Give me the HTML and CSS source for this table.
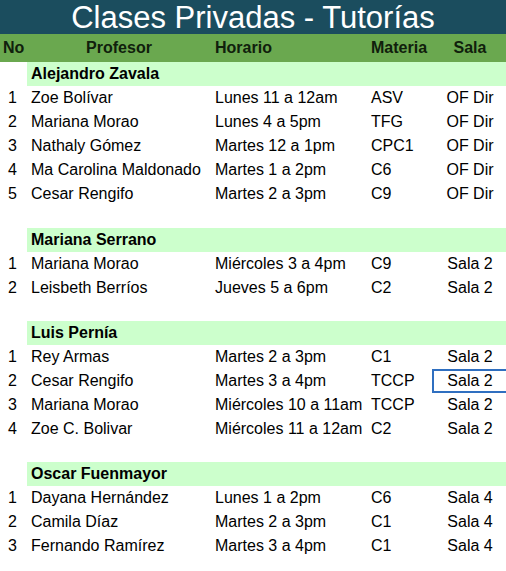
FILE: index.html
```html
<!DOCTYPE html>
<html lang="es">
<head>
<meta charset="utf-8">
<title>Clases Privadas - Tutorías</title>
<link rel="stylesheet" href="styles.css">
</head>
<body>
<div class="title">Clases Privadas - Tutorías</div>
<table class="sheet">
  <colgroup>
    <col class="c-no"><col class="c-prof"><col class="c-hor"><col class="c-mat"><col class="c-sala">
  </colgroup>
  <thead>
    <tr class="head">
      <th class="no">No</th><th class="prof">Profesor</th><th class="hor">Horario</th><th class="mat">Materia</th><th class="sala">Sala</th>
    </tr>
  </thead>
  <tbody>
    <tr class="group"><td class="empty"></td><td colspan="4">Alejandro Zavala</td></tr>
    <tr><td class="num">1</td><td>Zoe Bolívar</td><td>Lunes 11 a 12am</td><td>ASV</td><td class="sala">OF Dir</td></tr>
    <tr><td class="num">2</td><td>Mariana Morao</td><td>Lunes 4 a 5pm</td><td>TFG</td><td class="sala">OF Dir</td></tr>
    <tr><td class="num">3</td><td>Nathaly Gómez</td><td>Martes 12 a 1pm</td><td>CPC1</td><td class="sala">OF Dir</td></tr>
    <tr><td class="num">4</td><td>Ma Carolina Maldonado</td><td>Martes 1 a 2pm</td><td>C6</td><td class="sala">OF Dir</td></tr>
    <tr><td class="num">5</td><td>Cesar Rengifo</td><td>Martes 2 a 3pm</td><td>C9</td><td class="sala">OF Dir</td></tr>
    <tr class="blank first"><td colspan="5"></td></tr>

    <tr class="group"><td class="empty"></td><td colspan="4">Mariana Serrano</td></tr>
    <tr><td class="num">1</td><td>Mariana Morao</td><td>Miércoles 3 a 4pm</td><td>C9</td><td class="sala">Sala 2</td></tr>
    <tr><td class="num">2</td><td>Leisbeth Berríos</td><td>Jueves 5 a 6pm</td><td>C2</td><td class="sala">Sala 2</td></tr>
    <tr class="blank"><td colspan="5"></td></tr>

    <tr class="group"><td class="empty"></td><td colspan="4">Luis Pernía</td></tr>
    <tr><td class="num">1</td><td>Rey Armas</td><td>Martes 2 a 3pm</td><td>C1</td><td class="sala">Sala 2</td></tr>
    <tr><td class="num">2</td><td>Cesar Rengifo</td><td>Martes 3 a 4pm</td><td>TCCP</td><td class="sala selected">Sala 2</td></tr>
    <tr><td class="num">3</td><td>Mariana Morao</td><td>Miércoles 10 a 11am</td><td>TCCP</td><td class="sala">Sala 2</td></tr>
    <tr><td class="num">4</td><td>Zoe C. Bolivar</td><td>Miércoles 11 a 12am</td><td>C2</td><td class="sala">Sala 2</td></tr>
    <tr class="blank"><td colspan="5"></td></tr>

    <tr class="group"><td class="empty"></td><td colspan="4">Oscar Fuenmayor</td></tr>
    <tr><td class="num">1</td><td>Dayana Hernández</td><td>Lunes 1 a 2pm</td><td>C6</td><td class="sala">Sala 4</td></tr>
    <tr><td class="num">2</td><td>Camila Díaz</td><td>Martes 2 a 3pm</td><td>C1</td><td class="sala">Sala 4</td></tr>
    <tr><td class="num">3</td><td>Fernando Ramírez</td><td>Martes 3 a 4pm</td><td>C1</td><td class="sala">Sala 4</td></tr>
  </tbody>
</table>
</body>
</html>
```
FILE: styles.css
```css
html, body {
  margin: 0;
  padding: 0;
  background: #ffffff;
  overflow: hidden;
}
body {
  font-family: "Liberation Sans", Arial, sans-serif;
  font-size: 16px;
  color: #000000;
}
.title {
  height: 34px;
  line-height: 36px;
  background: #1b4d5e;
  color: #ffffff;
  font-size: 31px;
  text-align: center;
  white-space: nowrap;
}
.sheet {
  width: 506px;
  table-layout: fixed;
  border-collapse: collapse;
  border-spacing: 0;
}
.c-no { width: 27px; }
.c-prof { width: 184px; }
.c-hor { width: 156px; }
.c-mat { width: 65px; }
.c-sala { width: 74px; }
.sheet th, .sheet td {
  padding: 0 0 0 4px;
  height: 24px;
  white-space: nowrap;
  overflow: visible;
  text-align: left;
  vertical-align: middle;
  box-sizing: border-box;
}
.head th {
  height: 28px;
  background: #6aa84f;
  font-weight: bold;
  color: #10200c;
}
.head th.no { padding-left: 3px; }
.head th.prof { text-align: center; padding-left: 0; }
.head th.sala, .sheet td.sala { text-align: center; padding: 0 0 0 2px; }
.group td { background: #ccffcc; font-weight: bold; }
.group td.empty { background: #ffffff; }
.sheet td.num {
  text-align: right;
  padding: 0 10px 0 0;
}
.blank td { height: 21px; }
.blank.first td { height: 22px; }
.sheet td.selected {
  position: relative;
}
.sheet td.selected::after {
  content: "";
  position: absolute;
  left: 0;
  top: 0;
  bottom: 0;
  right: -6px;
  border: 2px solid #2f6fc0;
  pointer-events: none;
}
```
